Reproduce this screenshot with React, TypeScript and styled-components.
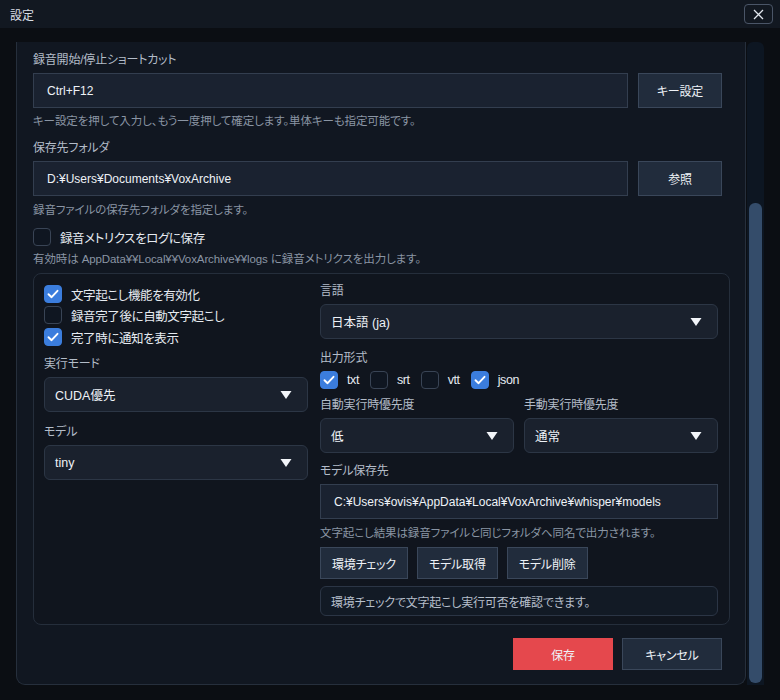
import React from "react";
import styled, { createGlobalStyle } from "styled-components";

const GlobalStyle = createGlobalStyle`
  html, body {
    margin: 0;
    padding: 0;
    background: #0b0e13;
  }
  body {
    font-family: "Liberation Sans", "Noto Sans CJK JP", sans-serif;
    font-feature-settings: "palt" 1;
    color: #e6ebf1;
  }
  * { box-sizing: border-box; }
`;

const Window = styled.div`
  width: 780px;
  height: 700px;
  display: flex;
  flex-direction: column;
  background: #0b0e13;
  overflow: hidden;
`;

const TitleBar = styled.div`
  height: 28px;
  flex: none;
  display: flex;
  align-items: center;
  justify-content: space-between;
  padding: 0 7px 0 10px;
  background: #121821;
`;

const Title = styled.div`
  font-size: 12px;
  color: #d9dfe7;
`;

const CloseButton = styled.div`
  width: 29px;
  height: 20px;
  border: 1px solid #4a5567;
  border-radius: 4px;
  display: flex;
  align-items: center;
  justify-content: center;
`;

const Body = styled.div`
  flex: 1;
  display: flex;
  gap: 1px;
  padding: 14px 16px 15px 16px;
  min-height: 0;
`;

const Panel = styled.div`
  flex: 1;
  display: flex;
  flex-direction: column;
  background: #111721;
  border: 1px solid #262f3c;
  border-top: none;
  border-radius: 0 0 9px 9px;
  padding: 9px 23px 0 16px;
`;

const ScrollTrack = styled.div`
  width: 17px;
  flex: none;
  background: #0d1622;
  border-radius: 6px 6px 0 0;
  display: flex;
  flex-direction: column;
  justify-content: flex-end;
  padding: 0 2px 2px 2px;
`;

const ScrollThumb = styled.div`
  height: 480px;
  background: #344c6a;
  border-radius: 6px;
`;

const FieldLabel = styled.div<{ $mt?: number }>`
  font-size: 12px;
  line-height: 16px;
  padding-top: 1px;
  color: #b3bcc8;
  letter-spacing: -0.2px;
  margin-top: ${(p) => p.$mt ?? 0}px;
  margin-bottom: 5px;
`;

const HelpText = styled.div<{ $mt?: number }>`
  font-size: 11.5px;
  line-height: 16px;
  color: #8a95a4;
  letter-spacing: -0.1px;
  margin-top: ${(p) => p.$mt ?? 6}px;
  white-space: nowrap;
`;

const InputRow = styled.div`
  display: flex;
  gap: 10px;
  height: 35px;
`;

const TextField = styled.div<{ $grow?: boolean }>`
  flex: ${(p) => (p.$grow ? "1" : "none")};
  height: 35px;
  display: flex;
  align-items: center;
  padding-left: 13px;
  background: #1a2230;
  border: 1px solid #333e4f;
  font-size: 12px;
  color: #eef2f7;
  white-space: nowrap;
`;

const Button = styled.div<{ $primary?: boolean; $w?: number; $h?: number }>`
  width: ${(p) => (p.$w ? `${p.$w}px` : "auto")};
  height: ${(p) => p.$h ?? 35}px;
  flex: none;
  display: flex;
  align-items: center;
  justify-content: center;
  padding: 0 11px;
  font-size: 12px;
  letter-spacing: -0.2px;
  color: #eef2f7;
  background: ${(p) => (p.$primary ? "#e5484d" : "#212c3c")};
  border: 1px solid ${(p) => (p.$primary ? "#e5484d" : "#3a475a")};
  white-space: nowrap;
`;

const CheckRow = styled.div<{ $mt?: number }>`
  display: flex;
  align-items: center;
  gap: 9px;
  height: 18px;
  margin-top: ${(p) => p.$mt ?? 0}px;
`;

const Box = styled.div<{ $checked?: boolean }>`
  width: 18px;
  height: 18px;
  flex: none;
  border-radius: 4px;
  display: flex;
  align-items: center;
  justify-content: center;
  background: ${(p) => (p.$checked ? "#3b7ddd" : "#0f1621")};
  border: 1px solid ${(p) => (p.$checked ? "#3b7ddd" : "#394455")};
`;

const CheckLabel = styled.span`
  font-size: 12.5px;
  letter-spacing: -0.4px;
  color: #e6ebf1;
  white-space: nowrap;
`;

const InnerBox = styled.div`
  margin-top: 6px;
  margin-right: -8px;
  display: grid;
  grid-template-columns: 264px 1fr;
  column-gap: 12px;
  padding: 8px 11px 8px 10px;
  border: 1px solid #252e3b;
  border-radius: 8px;
  background: #10151e;
`;

const Column = styled.div`
  display: flex;
  flex-direction: column;
`;

const SelectBox = styled.div`
  height: 35px;
  display: flex;
  align-items: center;
  justify-content: space-between;
  padding: 0 15px 0 10px;
  background: #1a212d;
  border: 1px solid #2c3645;
  border-radius: 6px;
  font-size: 12.5px;
  color: #eef2f7;
`;

const FormatRow = styled.div`
  display: flex;
  align-items: center;
  gap: 11px;
  height: 18px;
`;

const Split = styled.div`
  display: grid;
  grid-template-columns: 1fr 1fr;
  column-gap: 10px;
`;

const ActionRow = styled.div`
  display: flex;
  gap: 9px;
  margin-top: 6px;
`;

const StatusBox = styled.div`
  margin-top: 7px;
  height: 30px;
  display: flex;
  align-items: center;
  padding-left: 10px;
  border: 1px solid #2b3545;
  border-radius: 6px;
  background: #121a25;
  font-size: 12px;
  letter-spacing: -0.2px;
  color: #b6bfcb;
`;

const Footer = styled.div`
  display: flex;
  justify-content: flex-end;
  gap: 9px;
  margin-top: 13px;
`;

const Check = () => (
  <svg width="12" height="10" viewBox="0 0 12 10">
    <polyline points="1.5,5.2 4.6,8.2 10.5,1.8" fill="none" stroke="#fff" strokeWidth="1.9" strokeLinecap="round" strokeLinejoin="round" />
  </svg>
);

const Caret = () => (
  <svg width="12" height="10" viewBox="0 0 12 10">
    <polygon points="0.5,1 11.5,1 6,9" fill="#f2f5f9" />
  </svg>
);

const CheckItem = ({ checked, label, mt }: { checked?: boolean; label: string; mt?: number }) => (
  <CheckRow $mt={mt}>
    <Box $checked={checked}>{checked && <Check />}</Box>
    <CheckLabel>{label}</CheckLabel>
  </CheckRow>
);

const Select = ({ value }: { value: string }) => (
  <SelectBox>
    <span>{value}</span>
    <Caret />
  </SelectBox>
);

export default function App() {
  return (
    <>
      <GlobalStyle />
      <Window>
        <TitleBar>
          <Title>設定</Title>
          <CloseButton>
            <svg width="11" height="11" viewBox="0 0 11 11">
              <path d="M1 1 L10 10 M10 1 L1 10" stroke="#e2e7ee" strokeWidth="1.3" />
            </svg>
          </CloseButton>
        </TitleBar>
        <Body>
          <Panel>
            <FieldLabel>録音開始/停止ショートカット</FieldLabel>
            <InputRow>
              <TextField $grow>Ctrl+F12</TextField>
              <Button $w={84}>キー設定</Button>
            </InputRow>
            <HelpText $mt={5}>キー設定を押して入力し、もう一度押して確定します。単体キーも指定可能です。</HelpText>

            <FieldLabel $mt={10}>保存先フォルダ</FieldLabel>
            <InputRow>
              <TextField $grow>D:¥Users¥Documents¥VoxArchive</TextField>
              <Button $w={84}>参照</Button>
            </InputRow>
            <HelpText $mt={6}>録音ファイルの保存先フォルダを指定します。</HelpText>

            <CheckItem label="録音メトリクスをログに保存" mt={10} />
            <HelpText $mt={5}>有効時は AppData¥¥Local¥¥VoxArchive¥¥logs に録音メトリクスを出力します。</HelpText>

            <InnerBox>
              <Column>
                <CheckItem checked label="文字起こし機能を有効化" mt={3} />
                <CheckItem label="録音完了後に自動文字起こし" mt={3} />
                <CheckItem checked label="完了時に通知を表示" mt={4} />
                <FieldLabel $mt={9}>実行モード</FieldLabel>
                <Select value="CUDA優先" />
                <FieldLabel $mt={11}>モデル</FieldLabel>
                <Select value="tiny" />
              </Column>
              <Column>
                <FieldLabel>言語</FieldLabel>
                <Select value="日本語 (ja)" />
                <FieldLabel $mt={10}>出力形式</FieldLabel>
                <FormatRow>
                  <CheckItem checked label="txt" />
                  <CheckItem label="srt" />
                  <CheckItem label="vtt" />
                  <CheckItem checked label="json" />
                </FormatRow>
                <Split>
                  <Column>
                    <FieldLabel $mt={7}>自動実行時優先度</FieldLabel>
                    <Select value="低" />
                  </Column>
                  <Column>
                    <FieldLabel $mt={7}>手動実行時優先度</FieldLabel>
                    <Select value="通常" />
                  </Column>
                </Split>
                <FieldLabel $mt={9}>モデル保存先</FieldLabel>
                <TextField>C:¥Users¥ovis¥AppData¥Local¥VoxArchive¥whisper¥models</TextField>
                <HelpText $mt={6}>文字起こし結果は録音ファイルと同じフォルダへ同名で出力されます。</HelpText>
                <ActionRow>
                  <Button $h={32}>環境チェック</Button>
                  <Button $h={32}>モデル取得</Button>
                  <Button $h={32}>モデル削除</Button>
                </ActionRow>
                <StatusBox>環境チェックで文字起こし実行可否を確認できます。</StatusBox>
              </Column>
            </InnerBox>

            <Footer>
              <Button $primary $w={100} $h={32}>保存</Button>
              <Button $w={100} $h={32}>キャンセル</Button>
            </Footer>
          </Panel>
          <ScrollTrack>
            <ScrollThumb />
          </ScrollTrack>
        </Body>
      </Window>
    </>
  );
}
